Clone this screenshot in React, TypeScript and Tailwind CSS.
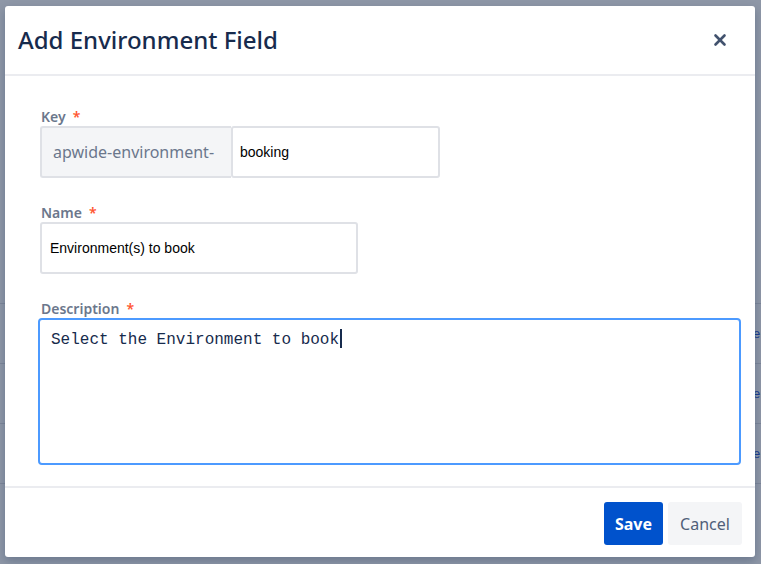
import { X } from "lucide-react";

const ui = { fontFamily: '"Noto Sans", "Open Sans", sans-serif' };
const arial = { fontFamily: '"Liberation Sans", Arial, sans-serif' };
const mono = { fontFamily: '"Liberation Mono", "DejaVu Sans Mono", monospace' };

function Label({ text }: { text: string }) {
  return (
    <div className="flex h-5 items-center gap-[7px] pl-[1px] text-[14px] font-semibold text-[#6b778c]">
      <span>{text}</span>
      <span className="text-[#ff5630]">*</span>
    </div>
  );
}

// page behind the dialog: only the table rows on the right edge show through
function Backdrop() {
  const rows = [0, 1, 2];
  return (
    <div className="flex h-full flex-col pt-[303px]" style={arial}>
      {rows.map((r) => (
        <div key={r} className="flex h-[60px] items-center border-t border-[#7d8699] pl-[753px] text-[13px] text-[#1d3f8f]">
          e
        </div>
      ))}
      <div className="border-t border-[#7d8699]" />
    </div>
  );
}

export default function App() {
  return (
    <div className="relative h-[564px] w-[761px] overflow-hidden bg-[#8e97a7]" style={ui}>
      <Backdrop />

      <div className="absolute left-[5px] top-[6px] flex h-[551px] w-[750px] flex-col rounded-[3px] bg-white shadow-[0_4px_10px_rgba(9,30,66,0.25)]">
        <header className="flex h-[70px] items-center justify-between border-b-2 border-[#ebecf0] pl-[13px] pr-[26px]">
          <h2 className="text-[24px] font-medium leading-none text-[#172b4d]">Add Environment Field</h2>
          <X className="h-[18px] w-[18px] text-[#42526e]" strokeWidth={3.5} />
        </header>

        <div className="flex flex-1 flex-col pl-[35px] pt-[30px]">
          <Label text="Key" />
          <div className="flex h-[52px]">
            <div className="flex w-[191px] items-center rounded-l-[3px] border-2 border-r-0 border-[#dfe1e6] bg-[#f4f5f7] pl-[11px] text-[16px] text-[#6b778c]">
              apwide-environment-
            </div>
            <div className="flex w-[209px] items-center rounded-[3px] border-2 border-[#dfe1e6] bg-white pl-[7px] text-[14px] text-black" style={arial}>
              booking
            </div>
          </div>

          <div className="mt-6">
            <Label text="Name" />
          </div>
          <div className="flex h-[52px] w-[318px] items-center rounded-[3px] border-2 border-[#dfe1e6] bg-white pl-[8px] text-[14px] text-black" style={arial}>
            Environment(s) to book
          </div>

          <div className="mt-6">
            <Label text="Description" />
          </div>
          <div className="-ml-[2px] h-[147px] w-[703px] rounded-[4px] border-2 border-[#4c9aff] bg-white pl-[11px] pt-[5px] text-[16px] leading-5 text-[#172b4d]" style={mono}>
            Select the Environment to book
            <span className="ml-[1px] inline-block h-[19px] w-[2px] translate-y-[4px] bg-[#172b4d]" />
          </div>
        </div>

        <footer className="flex h-[71px] items-start justify-end gap-[5px] border-t-2 border-[#ebecf0] pr-[13px] pt-[14px]">
          <button className="h-[43px] w-[59px] rounded-[3px] bg-[#0052cc] text-[16px] font-bold text-white">Save</button>
          <button className="h-[43px] w-[74px] rounded-[3px] bg-[#f4f5f7] text-[16px] text-[#505f79]">Cancel</button>
        </footer>
      </div>
    </div>
  );
}
